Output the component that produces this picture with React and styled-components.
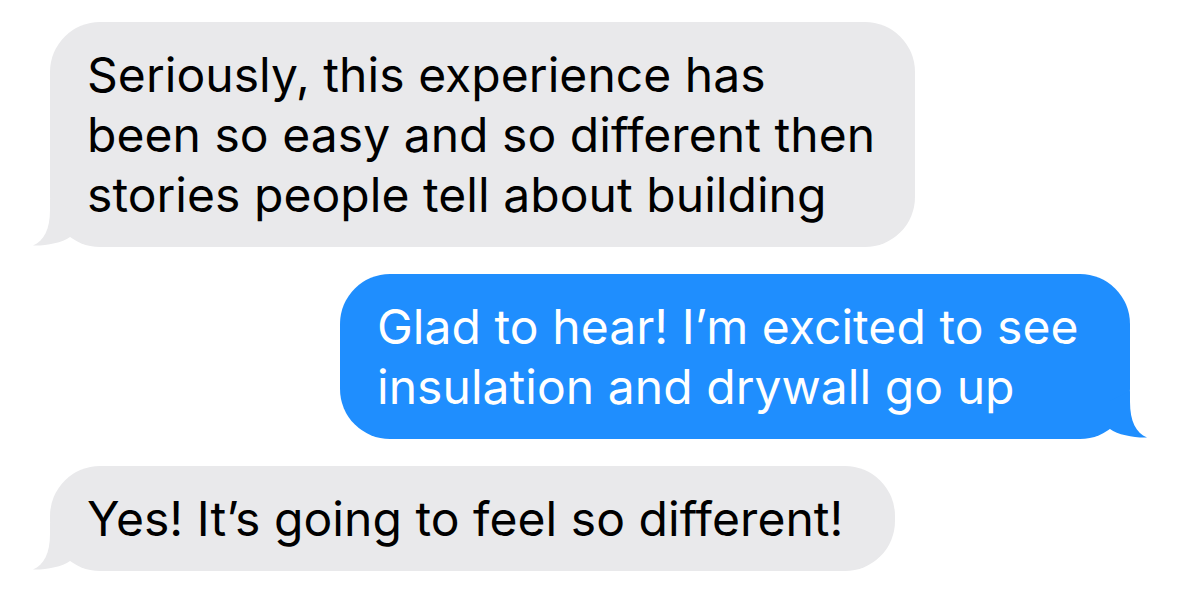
import styled, { createGlobalStyle } from "styled-components";

const GlobalStyle = createGlobalStyle`
  html, body {
    margin: 0;
    padding: 0;
    background: #ffffff;
  }
`;

const Thread = styled.div`
  display: flex;
  flex-direction: column;
  gap: 27px;
  padding: 22px 49px 0 50px;
  font-family: Inter, "Liberation Sans", Arial, sans-serif;
`;

const Bubble = styled.div`
  position: relative;
  box-sizing: border-box;
  width: ${(p) => p.$width}px;
  align-self: ${(p) => (p.$sent ? "flex-end" : "flex-start")};
  padding: 23px 30px 22px 37px;
  border-radius: 50px;
  background: ${(p) => (p.$sent ? "#1f8efe" : "#e9e9eb")};
  color: ${(p) => (p.$sent ? "#ffffff" : "#000000")};
  font-size: 48px;
  line-height: 60px;
  letter-spacing: 0.05px;
  white-space: nowrap;
`;

const Tail = styled.svg`
  position: absolute;
  bottom: 0;
  width: 60px;
  height: 48px;
  ${(p) =>
    p.$sent
      ? "right: -20px; transform: scaleX(-1);"
      : "left: -20px;"}
`;

function BubbleTail({ sent }) {
  return (
    <Tail $sent={sent} viewBox="0 0 60 48">
      <path
        d="M20 0 L20 11 C20 30 14 42 3 46.5 C15 47 32 44 40 38 L40 10 Z"
        fill={sent ? "#1f8efe" : "#e9e9eb"}
      />
    </Tail>
  );
}

const Text = styled.span`
  position: relative;
  z-index: 1;
`;

function Message({ sent, width, lines }) {
  return (
    <Bubble $sent={sent} $width={width}>
      <BubbleTail sent={sent} />
      {lines.map((line, i) => (
        <Text key={i}>
          {line}
          {i < lines.length - 1 && <br />}
        </Text>
      ))}
    </Bubble>
  );
}

export default function App() {
  return (
    <>
      <GlobalStyle />
      <Thread>
        <Message
          width={865}
          lines={[
            "Seriously, this experience has",
            "been so easy and so different then",
            "stories people tell about building",
          ]}
        />
        <Message
          sent
          width={790}
          lines={["Glad to hear! I’m excited to see", "insulation and drywall go up"]}
        />
        <Message width={845} lines={["Yes! It’s going to feel so different!"]} />
      </Thread>
    </>
  );
}
